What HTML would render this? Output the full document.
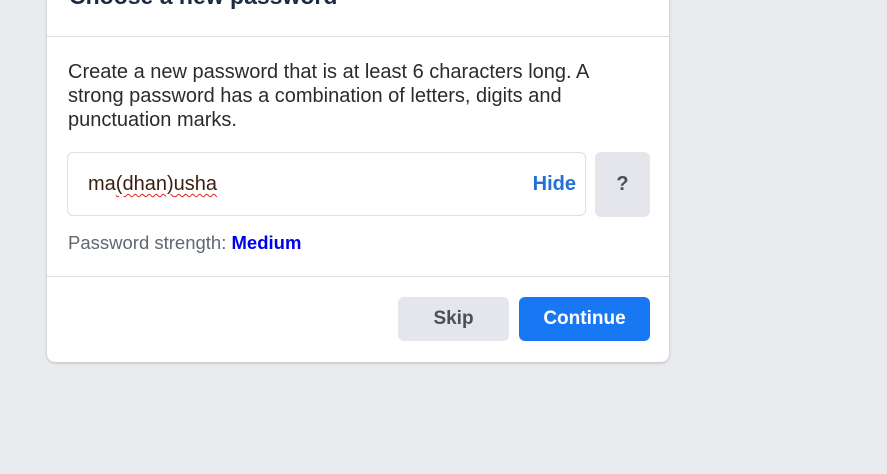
<!DOCTYPE html>
<html><head><style>
body{margin:0;width:887px;height:474px;background:#e9ebee;font-family:"Liberation Sans",Arial,sans-serif;position:relative;overflow:hidden}
.card{position:absolute;left:47px;top:-40px;width:622px;height:402px;background:#fff;border-radius:8px;box-shadow:0 1px 3px rgba(0,0,0,.2)}
.t{position:absolute;left:22px;top:23px;font-size:23px;font-weight:bold;color:#1c2b40}
.hr{position:absolute;left:0;right:0;height:1px;background:#dadde1}
.p{position:absolute;left:21px;top:100px;width:545px;font-size:20px;line-height:24px;color:#2a2b2e}
.in{position:absolute;left:20px;top:192px;width:517px;height:62px;border:1px solid #dddfe2;border-radius:6px}
.v{position:absolute;left:20px;top:20px;font-size:20px;color:#3a1f10}
.v u{text-decoration:underline wavy #e02020;text-decoration-thickness:1px;text-underline-offset:3px}
.h{position:absolute;right:9px;top:20px;font-size:20px;font-weight:bold;color:#216fdb}
.q{position:absolute;left:548px;top:192px;width:55px;height:65px;background:#e4e6eb;border-radius:6px;text-align:center;line-height:65px;font-size:20px;font-weight:bold;color:#4b4f56}
.s{position:absolute;left:21px;top:272px;font-size:18.5px;color:#606770}
.s b{color:#0000f0}
.b{position:absolute;top:337px;height:44px;line-height:44px;border-radius:6px;text-align:center;font-size:19px;font-weight:bold}
</style></head><body>
<div class="card">
<div class="t">Choose a new password</div>
<div class="hr" style="top:76px"></div>
<div class="p">Create a new password that is at least 6 characters long. A strong password has a combination of letters, digits and punctuation marks.</div>
<div class="in"><span class="v">ma<u>(dhan)</u><u>usha</u></span><span class="h">Hide</span></div>
<div class="q">?</div>
<div class="s">Password strength: <b>Medium</b></div>
<div class="hr" style="top:316px"></div>
<div class="b" style="left:351px;width:111px;background:#e4e6eb;color:#4b4f56">Skip</div>
<div class="b" style="left:472px;width:131px;background:#1877f2;color:#fff">Continue</div>
</div>
</body></html>
